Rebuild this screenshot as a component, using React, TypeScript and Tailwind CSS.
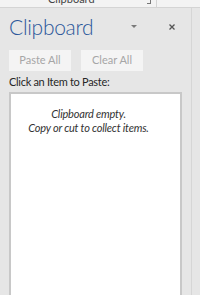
export default function App() {
  return (
    <div
      className="flex h-[295px] w-[200px] flex-col overflow-hidden bg-[#e6e6e6] text-[#262626]"
      style={{ fontFamily: 'Lato, "Open Sans", sans-serif' }}
    >
      {/* Ribbon strip (cut off) */}
      <div className="flex h-[8px] shrink-0 border-b border-[#d4d4d4] bg-[#f3f3f3]">
        <div className="relative w-[157px] overflow-hidden border-r border-[#d4d4d4]">
          <span className="absolute left-[48px] top-[-8px] text-[11px] leading-[13px] text-[#444]">Clipboard</span>
          <span className="absolute left-[147px] top-[0px] h-[4px] w-[4px] border-b border-r border-[#777]" />
        </div>
        <div className="flex-1" />
      </div>

      <div className="flex min-h-0 flex-1">
        {/* Task pane */}
        <div className="flex w-[192px] shrink-0 flex-col border-r border-[#d6d6d6] pl-[9px] pr-[9px]">
          <div className="flex h-[34px] items-center pt-[3px]">
            <h1 className="text-[21px] font-light leading-none tracking-[-0.3px] text-[#2b579a]">Clipboard</h1>
            <span className="ml-auto mr-[32px] h-0 w-0 border-x-[3px] border-t-[3px] border-x-transparent border-t-[#7a7a7a]" />
            <svg width="6" height="6" viewBox="0 0 6 6" className="mr-[7px]">
              <path d="M0.5 0.5L5.5 5.5M5.5 0.5L0.5 5.5" stroke="#555" strokeWidth="1.3" />
            </svg>
          </div>

          <div className="mt-[8px] flex gap-[10px]">
            <button className="h-[21px] w-[62px] bg-[#f4f4f4] text-[11px] text-[#a6a6a6]">Paste All</button>
            <button className="h-[21px] w-[62px] bg-[#f4f4f4] text-[11px] text-[#a6a6a6]">Clear All</button>
          </div>

          <p className="mt-[2px] text-[11px] leading-[18px] tracking-[-0.3px] text-[#262626]">Click an Item to Paste:</p>

          <div className="mt-[1px] flex-1 border-[2px] border-b-0 border-[#c8c8c8] bg-white pr-[14px] pt-[13px] text-center text-[11px] italic leading-[14px] tracking-[-0.2px] text-[#333]">
            <p>Clipboard empty.</p>
            <p>Copy or cut to collect items.</p>
          </div>
        </div>
        <div className="flex-1" />
      </div>
    </div>
  );
}
